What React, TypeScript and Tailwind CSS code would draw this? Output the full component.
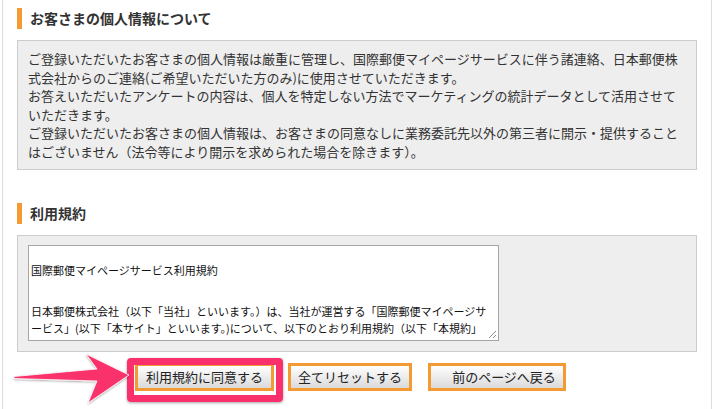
import React from 'react';

const font = { fontFamily: '"Noto Sans CJK JP", "Noto Sans", sans-serif' };

const SectionTitle: React.FC<{ label: string }> = ({ label }) => (
  <div className="flex items-center gap-[8px]">
    <div className="w-[5px] h-[21px] bg-[#f39a33]" />
    <h2 className="text-[14px] font-bold text-[#333333] leading-[21px]">{label}</h2>
  </div>
);

const OrangeButton: React.FC<{ label: string; width: string; extra?: string }> = ({ label, width, extra }) => (
  <div className={`border-[3px] border-[#f39a33] h-[28px] ${width}`}>
    <button className={`w-full h-full flex items-center justify-center text-[13px] text-[#222222] bg-gradient-to-b from-white to-[#dadada] ${extra ?? ''}`}>
      {label}
    </button>
  </div>
);

const App: React.FC = () => {
  return (
    <div className="relative w-[713px] h-[409px] overflow-hidden bg-white" style={font}>
      <div className="ml-[2px] w-[710px] h-full border-x border-[#dddddd] px-[14px] pt-[8px]">
        {/* 個人情報 */}
        <SectionTitle label="お客さまの個人情報について" />
        <div className="mt-[11px] bg-[#eeeeee] border border-[#cccccc] pl-[10px] pr-[12px] pt-[9px] pb-[8px] text-[13px] leading-[18.5px] text-[#333333]">
          <p>ご登録いただいたお客さまの個人情報は厳重に管理し、国際郵便マイページサービスに伴う諸連絡、日本郵便株式会社からのご連絡(ご希望いただいた方のみ)に使用させていただきます。</p>
          <p>お答えいただいたアンケートの内容は、個人を特定しない方法でマーケティングの統計データとして活用させていただきます。</p>
          <p>ご登録いただいたお客さまの個人情報は、お客さまの同意なしに業務委託先以外の第三者に開示・提供することはございません（法令等により開示を求められた場合を除きます）。</p>
        </div>

        {/* 利用規約 */}
        <div className="mt-[33px]">
          <SectionTitle label="利用規約" />
        </div>
        <div className="mt-[11px] bg-[#eeeeee] border border-[#cccccc] pl-[10px] pt-[9px] pb-[10px]">
          <div className="relative w-[471px] h-[96px] bg-white border border-[#a6a6a6] overflow-hidden px-[2px] pt-[16px] text-[11px] leading-[17px] text-[#111111] whitespace-nowrap">
            <p>国際郵便マイページサービス利用規約</p>
            <p className="mt-[24px]">日本郵便株式会社（以下「当社」といいます。）は、当社が運営する「国際郵便マイページサ</p>
            <p>ービス」(以下「本サイト」といいます。)について、以下のとおり利用規約（以下「本規約」</p>
            <svg className="absolute right-[1px] bottom-[1px]" width="10" height="10" viewBox="0 0 10 10">
              <path d="M9 2 L2 9 M9 6 L6 9" stroke="#8a8a8a" strokeWidth="1" />
            </svg>
          </div>
        </div>

        {/* ボタン */}
        <div className="mt-[11px] ml-[118px] flex items-center">
          <OrangeButton label="利用規約に同意する" width="w-[139px]" />
          <div className="ml-[14px]">
            <OrangeButton label="全てリセットする" width="w-[124px]" />
          </div>
          <div className="ml-[16px]">
            <OrangeButton label="前のページへ戻る" width="w-[138px]" extra="pl-[14px]" />
          </div>
        </div>
      </div>

      {/* 注釈: ピンクの枠と矢印 */}
      <div className="absolute left-[127px] top-[358px] w-[156px] h-[44px] border-[7px] border-[#f9306c] rounded-[4px] shadow-[0_1px_3px_rgba(0,0,0,0.35)]" />
      <svg className="absolute left-0 top-[345px]" width="140" height="64" viewBox="0 345 140 64">
        <defs>
          <filter id="sh" x="-10%" y="-20%" width="130%" height="150%">
            <feDropShadow dx="0" dy="1" stdDeviation="1.2" floodColor="#000" floodOpacity="0.35" />
          </filter>
        </defs>
        <path
          d="M14 376.5 L97 369 L86 354 L129 375 L88 403 L97 381 L14 378.5 Z"
          fill="#f9306c"
          stroke="#ffffff"
          strokeWidth="0.8"
          strokeLinejoin="round"
          filter="url(#sh)"
        />
      </svg>
    </div>
  );
};

export default App;
